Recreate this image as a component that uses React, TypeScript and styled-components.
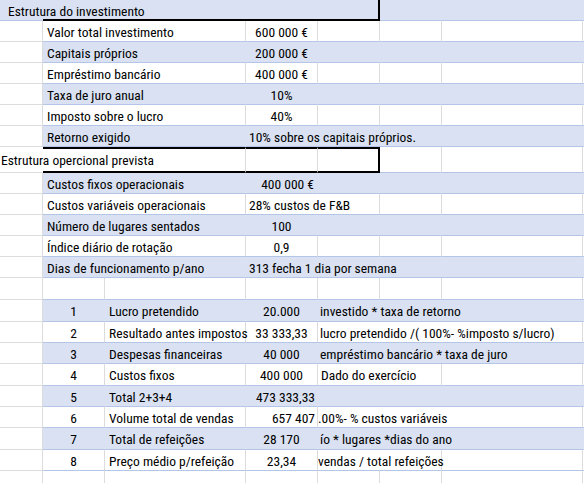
import React from 'react';
import styled, { createGlobalStyle } from 'styled-components';

const BLUE = '#d9e1f2';
const BLUE_LINE = '#b4c6e7';
const GRID = '#dcdcdc';
const COLS = '43px 62px 141px 72px 62px 62px 141px 1fr';

const GlobalStyle = createGlobalStyle`
  html, body {
    margin: 0;
    padding: 0;
    background: #fff;
  }
  body {
    overflow: hidden;
  }
`;

const Sheet = styled.div`
  width: 584px;
  height: 483px;
  overflow: hidden;
  font-family: 'Roboto Condensed', 'Liberation Sans Narrow', Roboto, sans-serif;
  font-size: 13.5px;
  color: #000;
`;

const Row = styled.div<{ $h: number; $band?: boolean }>`
  display: grid;
  grid-template-columns: ${COLS};
  height: ${(p) => p.$h}px;
  background: ${(p) => (p.$band ? BLUE : '#fff')};
`;

type Align = 'left' | 'center' | 'right';

const Cell = styled.div<{
  $span?: number;
  $align?: Align;
  $line?: boolean;
  $pad?: number;
  $box?: 'top' | 'bottom' | 'both';
  $boxRight?: boolean;
}>`
  grid-column: span ${(p) => p.$span ?? 1};
  display: flex;
  align-items: center;
  justify-content: ${(p) =>
    p.$align === 'center' ? 'center' : p.$align === 'right' ? 'flex-end' : 'flex-start'};
  padding: 1px ${(p) => p.$pad ?? 3}px 0;
  box-sizing: border-box;
  min-width: 0;
  white-space: nowrap;
  overflow: visible;
  border-bottom: 1px solid ${BLUE_LINE};
  border-right: 1px solid ${(p) => (p.$line ? GRID : 'transparent')};
  ${(p) => (p.$box === 'top' || p.$box === 'both' ? 'border-top: 2px solid #000;' : '')}
  ${(p) => (p.$box === 'bottom' || p.$box === 'both' ? 'border-bottom: 2px solid #000;' : '')}
  ${(p) => (p.$boxRight ? 'border-right: 2px solid #000;' : '')}
`;

const SideCell = styled.div<{ $band?: boolean; $line?: boolean; $pad?: number }>`
  display: flex;
  align-items: center;
  padding: 1px 0 0 ${(p) => p.$pad ?? 0}px;
  box-sizing: border-box;
  white-space: nowrap;
  overflow: visible;
  position: relative;
  z-index: 1;
  background: ${(p) => (p.$band ? BLUE : '#fff')};
  border-bottom: 1px solid ${(p) => (p.$band ? BLUE_LINE : GRID)};
  border-right: 1px solid ${(p) => (p.$line === false ? 'transparent' : GRID)};
`;

const Blanks = ({ n, line }: { n: number; line: boolean }) => (
  <>
    {Array.from({ length: n }).map((_, i) => (
      <Cell key={i} $line={line} />
    ))}
  </>
);

type InvestProps = {
  label: string;
  value: string;
  band?: boolean;
  align?: Align;
  valueSpan?: number;
};

const InvestRow = ({ label, value, band, align = 'center', valueSpan = 1 }: InvestProps) => (
  <Row $h={21} $band={band}>
    <SideCell />
    <Cell $span={2} $line={!band} $pad={4}>
      {label}
    </Cell>
    <Cell $span={valueSpan} $align={align} $line={!band}>
      {value}
    </Cell>
    <Blanks n={5 - valueSpan} line={!band} />
  </Row>
);

type CalcProps = {
  n: number;
  label: string;
  value: string;
  note?: string;
  band?: boolean;
  noteSpan?: number;
  align?: Align;
  h?: number;
  notePad?: number;
};

const CalcRow = ({ n, label, value, note, band, noteSpan = 1, align = 'center', h = 21, notePad = 2 }: CalcProps) => (
  <Row $h={h} $band={band}>
    <SideCell />
    <Cell $align="center" $line={!band}>
      {n}
    </Cell>
    <Cell $line={!band} $pad={4}>
      {label}
    </Cell>
    <Cell $align={align} $line={!band} $pad={align === 'right' ? 2 : 0}>
      {value}
    </Cell>
    <Cell $span={noteSpan} $line={!band} $pad={notePad}>
      {note}
    </Cell>
    <Blanks n={4 - noteSpan} line={!band} />
  </Row>
);

const EmptyRow = ({ h }: { h: number }) => (
  <Row $h={h}>
    <SideCell />
    <Blanks n={7} line />
  </Row>
);

const App = () => (
  <>
    <GlobalStyle />
    <Sheet>
      <Row $h={21} $band>
        <SideCell $band $line={false} $pad={8}>
          Estrutura do investimento
        </SideCell>
        <Cell $span={4} $box="bottom" $boxRight />
        <Blanks n={3} line={false} />
      </Row>
      <InvestRow label="Valor total investimento" value="600 000 €" />
      <InvestRow label="Capitais próprios" value="200 000 €" band />
      <InvestRow label="Empréstimo bancário" value="400 000 €" />
      <InvestRow label="Taxa de juro anual" value="10%" band />
      <InvestRow label="Imposto sobre o lucro" value="40%" />
      <InvestRow label="Retorno exigido" value="10% sobre os capitais próprios." band align="left" valueSpan={5} />

      <Row $h={26}>
        <SideCell $line={false} $pad={1}>
          Estrutura opercional prevista
        </SideCell>
        <Cell $span={2} $box="both" $line />
        <Cell $box="both" $line />
        <Cell $box="both" $boxRight />
        <Blanks n={3} line />
      </Row>
      <InvestRow label="Custos fixos operacionais" value="400 000 €" band align="right" valueSpan={1} />
      <InvestRow label="Custos variáveis operacionais" value="28% custos de F&B" align="left" valueSpan={2} />
      <InvestRow label="Número de lugares sentados" value="100" band />
      <InvestRow label="Índice diário de rotação" value="0,9" />
      <InvestRow label="Dias de funcionamento p/ano" value="313 fecha 1 dia por semana" band align="left" valueSpan={5} />
      <EmptyRow h={22} />

      <CalcRow n={1} label="Lucro pretendido" value="20.000" note="investido * taxa de retorno" band noteSpan={4} h={22} />
      <CalcRow n={2} label="Resultado antes impostos" value="33 333,33" note="lucro pretendido /( 100%- %imposto s/lucro)" noteSpan={3} />
      <CalcRow n={3} label="Despesas financeiras" value="40 000" note="empréstimo bancário * taxa de juro" band noteSpan={4} />
      <CalcRow n={4} label="Custos fixos" value="400 000" note="Dado do exercício" noteSpan={2} notePad={3} h={22} />
      <CalcRow n={5} label="Total 2+3+4" value="473 333,33" band noteSpan={4} align="right" />
      <CalcRow n={6} label="Volume total de vendas" value="657 407" note=".00%- % custos variáveis" noteSpan={3} align="right" notePad={0} />
      <CalcRow n={7} label="Total de refeições" value="28 170" note="ío * lugares *dias do ano" band noteSpan={4} h={22} />
      <CalcRow n={8} label="Preço médio p/refeição" value="23,34" note="vendas / total refeições" noteSpan={2} notePad={0} />
      <EmptyRow h={22} />
    </Sheet>
  </>
);

export default App;
